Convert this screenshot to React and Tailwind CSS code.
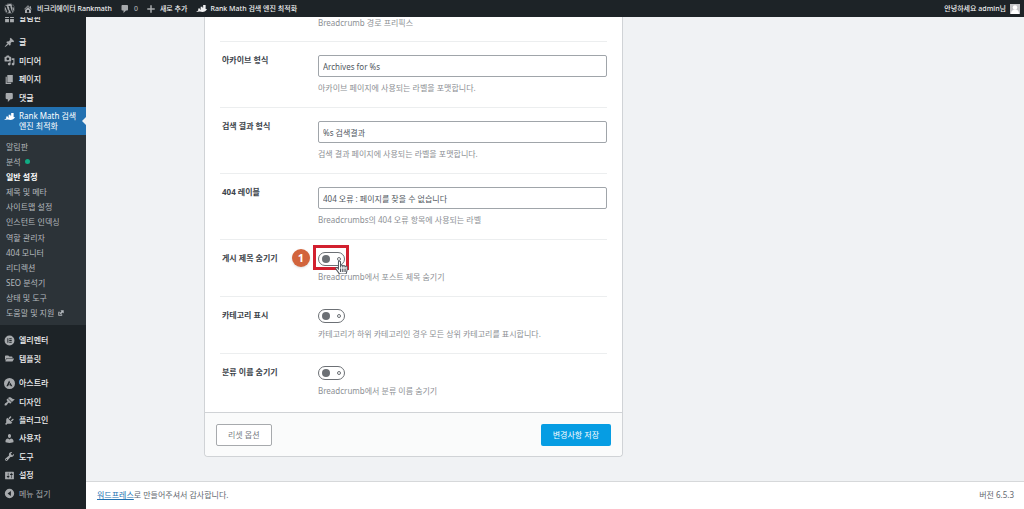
import React from 'react';
import { FaWordpress, FaFolderOpen, FaHandPointer } from 'react-icons/fa';

const paths = {
  dashboard: 'M2 3h7v6H2zM11 3h7v6h-7zM2 11h7v6H2zM11 11h7v6h-7z',
  post: 'M10.44 3.02l1.82-1.82 6.36 6.35-1.83 1.82c-1.05-.68-2.48-.57-3.41.36l-.75.75c-.92.93-1.04 2.35-.35 3.41l-1.83 1.82-2.41-2.41-2.8 2.79c-.42.42-3.38 2.71-3.8 2.29s1.86-3.39 2.28-3.81l2.79-2.79L4.1 9.36l1.83-1.82c1.05.69 2.48.57 3.4-.36l.75-.75c.93-.92 1.05-2.35.36-3.41z',
  media: 'M13 11V4c0-.55-.45-1-1-1h-1.67L9 1H5L3.67 3H2c-.55 0-1 .45-1 1v7c0 .55.45 1 1 1h10c.55 0 1-.45 1-1zM7 4.5c1.38 0 2.5 1.12 2.5 2.5S8.38 9.5 7 9.5 4.5 8.38 4.5 7 5.62 4.5 7 4.5zM14 6h5v10.5c0 1.38-1.12 2.5-2.5 2.5S14 17.88 14 16.5s1.12-2.5 2.5-2.5c.17 0 .34.02.5.05V9h-3V6zm-4 8.05V13h2v3.5c0 1.38-1.12 2.5-2.5 2.5S7 17.88 7 16.5 8.12 14 9.5 14c.17 0 .34.02.5.05z',
  page: 'M6 15V2h10v13H6zm-1 1h8v2H3V5h2v11z',
  comments: 'M5 2h9c1.1 0 2 .9 2 2v7c0 1.1-.9 2-2 2h-2l-5 5v-5H5c-1.1 0-2-.9-2-2V4c0-1.1.9-2 2-2z',
  home: 'M16 8.5l1.53 1.53-1.06 1.06L10 4.6l-6.47 6.49-1.06-1.06L10 2.5l4 4v-2h2v4zm-6-2.46l6 5.99V18H4v-5.97zM12 17v-5H8v5h4z',
  plus: 'M17.5 8.5v3h-6v6h-3v-6h-6v-3h6v-6h3v6z',
  rank: 'M4 10h3.500v2.500l1-.7V7H12v2.500l1-.8V3.500h4.500V11c1.500-.2 2.500 0 2.500 0-1.500 3-4.500 5.500-8.500 5.500L7 15.500l-7 1 4-3z',
  elementor: 'M10 1a9 9 0 1 0 0 18 9 9 0 0 0 0-18zM6.200 6h1.700v8H6.200zM9.500 6H14v1.600H9.500zM9.500 9.200H14v1.600H9.500zM9.500 12.400H14V14H9.500z',
  astra: 'M10 0a10 10 0 1 0 0 20 10 10 0 0 0 0-20zM9.300 4.500l1.600 3.200-3.500 7.300H4.300zM11.500 8.800l3.800 6.200h-3l-.8-2H9.400z',
  appearance: 'M14.48 11.06L7.41 3.99l1.5-1.5c.5-.56 2.3-.47 3.51.32 1.21.8 1.43 1.28 2.91 2.1 1.18.64 2.45 1.26 4.45.85zm-.71.71L6.7 4.7 4.93 6.47c-.39.39-.39 1.02 0 1.41l1.06 1.06c.39.39.39 1.03 0 1.42-.6.6-1.43 1.11-2.21 1.69-.35.26-.7.53-1.01.84C1.43 14.23.4 16.08 1.4 17.07c.99 1 2.84-.03 4.18-1.36.31-.31.58-.66.85-1.02.57-.78 1.08-1.61 1.69-2.21.39-.39 1.02-.39 1.41 0l1.06 1.06c.39.39 1.02.39 1.41 0z',
  plugins: 'M13.11 4.36L9.87 7.6 8 5.73l3.24-3.24c.35-.34 1.05-.2 1.56.32.52.51.66 1.21.31 1.55zm-8 1.77l.91-1.12 9.01 9.01-1.19.84c-.71.71-2.63 1.16-3.82 1.16H6.14L4.9 17.26c-.59.59-1.54.59-2.12 0-.59-.58-.59-1.53 0-2.12l1.24-1.24v-3.88c0-1.13.4-3.19 1.09-3.89zm7.26 3.97l3.24-3.24c.34-.35 1.04-.21 1.55.31.52.51.66 1.21.31 1.55l-3.24 3.25z',
  users: 'M10 9.25c-2.27 0-2.73-3.44-2.73-3.44C7 4.02 7.82 2 9.97 2c2.16 0 2.98 2.02 2.71 3.81 0 0-.41 3.44-2.68 3.44zm0 2.57L12.72 10c2.39 0 4.52 2.33 4.52 4.53v2.49s-3.65 1.13-7.24 1.13c-3.65 0-7.24-1.13-7.24-1.13v-2.49c0-2.25 1.94-4.48 4.47-4.48z',
  tools: 'M16.68 9.77c-1.34 1.34-3.3 1.67-4.95.99l-5.41 6.52c-.99.99-2.59.99-3.58 0s-.99-2.59 0-3.57l6.52-5.42c-.68-1.65-.35-3.61.99-4.95 1.28-1.28 3.12-1.62 4.72-1.06l-2.89 2.89 2.82 2.82 2.86-2.87c.53 1.58.18 3.39-1.08 4.65zM3.81 16.21c.4.39 1.04.39 1.43 0 .4-.4.4-1.04 0-1.43-.39-.4-1.03-.4-1.43 0-.39.39-.39 1.03 0 1.43z',
  settings: 'M18 16V4c0-.55-.45-1-1-1H3c-.55 0-1 .45-1 1v12c0 .55.45 1 1 1h14c.55 0 1-.45 1-1zM8 11h1c.55 0 1 .45 1 1s-.45 1-1 1H8v1.5c0 .28-.22.5-.5.5s-.5-.22-.5-.5V13H6c-.55 0-1-.45-1-1s.45-1 1-1h1V5.5c0-.28.22-.5.5-.5s.5.22.5.5V11zm5-2h-1c-.55 0-1-.45-1-1s.45-1 1-1h1V5.5c0-.28.22-.5.5-.5s.5.22.5.5V7h1c.55 0 1 .45 1 1s-.45 1-1 1h-1v5.5c0 .28-.22.5-.5.5s-.5-.22-.5-.5V9z',
  collapse: 'M10 1.500a8.500 8.500 0 1 0 0 17 8.500 8.500 0 0 0 0-17zM12.500 5.500v9l-6-4.500z',
  external: 'M8 1h11v11l-3.500-3.500-6 6-4-4 6-6zM1 6h5v3H4v7h7v-2h3v5H1z',
};

function Icon({ name, className = 'size-[11px]' }) {
  return (
    <svg viewBox="0 0 20 20" fill="currentColor" fillRule="evenodd" aria-hidden="true" className={`shrink-0 ${className}`}>
      <path d={paths[name]} />
    </svg>
  );
}

function MenuItem({ icon, children, muted }) {
  return (
    <li className="flex">
      <a href="#" className={`flex min-h-[18px] flex-1 items-center gap-1 pl-1 ${muted ? 'font-normal text-[#a7aaad]' : 'text-[#f0f0f1]'}`}>
        <span className="flex w-[11px] justify-center text-[#a7aaad]">
          {icon === 'folder' ? <FaFolderOpen className="size-[9px]" /> : <Icon name={icon} />}
        </span>
        {children}
      </a>
    </li>
  );
}

const submenu = ['알림판', '분석', '일반 설정', '제목 및 메타', '사이트맵 설정', '인스턴트 인덱싱', '역할 관리자', '404 모니터', '리디렉션', 'SEO 분석기', '상태 및 도구', '도움말 및 지원'];

function Sidebar() {
  return (
    <aside className="w-[86px] shrink-0 overflow-hidden bg-[#1d2327] font-medium">
      <nav className="-mt-2">
        <ul>
          <MenuItem icon="dashboard">알림판</MenuItem>
        </ul>
        <ul className="mt-1.5 grid h-[74px]">
          <MenuItem icon="post">글</MenuItem>
          <MenuItem icon="media">미디어</MenuItem>
          <MenuItem icon="page">페이지</MenuItem>
          <MenuItem icon="comments">댓글</MenuItem>
        </ul>
        <a href="#" className="relative flex gap-1 bg-[#2271b1] py-1 pl-1 leading-[10px] font-normal text-white">
          <Icon name="rank" />
          <span>Rank Math 검색<br />엔진 최적화</span>
          <span className="absolute top-1/2 right-0 -translate-y-1/2 border-4 border-l-0 border-transparent border-r-[#f0f2f4]" />
        </a>
        <ul className="grid h-[190px] bg-[#2c3338] pt-1 pb-1 font-normal text-[#b4b9be]">
          {submenu.map((t) => (
            <li key={t} className="flex">
              <a href="#" className={`flex flex-1 items-center gap-1 pl-1.5 ${t === '일반 설정' ? 'font-bold text-white' : ''}`}>
                {t}
                {t === '분석' && <span className="size-[5px] rounded-full bg-[#10ac84]" />}
                {t === '도움말 및 지원' && <Icon name="external" className="size-[6px]" />}
              </a>
            </li>
          ))}
        </ul>
        <ul className="mt-1.5 grid h-[37px]">
          <MenuItem icon="elementor">엘리멘터</MenuItem>
          <MenuItem icon="folder">템플릿</MenuItem>
        </ul>
        <ul className="mt-1.5 grid h-[129px]">
          <MenuItem icon="astra">아스트라</MenuItem>
          <MenuItem icon="appearance">디자인</MenuItem>
          <MenuItem icon="plugins">플러그인</MenuItem>
          <MenuItem icon="users">사용자</MenuItem>
          <MenuItem icon="tools">도구</MenuItem>
          <MenuItem icon="settings">설정</MenuItem>
          <MenuItem icon="collapse" muted>메뉴 접기</MenuItem>
        </ul>
      </nav>
    </aside>
  );
}

function AdminBar() {
  return (
    <header className="flex h-[17px] items-center gap-2 bg-[#1d2327] px-1 text-[7px] font-medium text-[#f0f0f1]">
      <a href="#" aria-label="WordPress" className="text-[#a7aaad]"><FaWordpress className="size-[11px]" /></a>
      <a href="#" className="flex items-center gap-1"><Icon name="home" className="size-[10px] text-[#a7aaad]" />비크리에이터 Rankmath</a>
      <a href="#" className="flex items-center gap-1 text-[#a7aaad]"><Icon name="comments" className="size-[10px]" />0</a>
      <a href="#" className="flex items-center gap-1"><Icon name="plus" className="size-[10px] text-[#a7aaad]" />새로 추가</a>
      <a href="#" className="flex items-center gap-1"><Icon name="rank" />Rank Math 검색 엔진 최적화</a>
      <a href="#" className="ml-auto flex items-center gap-1">
        안녕하세요 admin님
        <svg viewBox="0 0 20 20" className="size-[10px]" aria-hidden="true">
          <rect width="20" height="20" fill="#c3c4c7" />
          <circle cx="10" cy="7" r="4.500" fill="#fff" />
          <path d="M2 20c0-6 3-9 8-9s8 3 8 9z" fill="#fff" />
        </svg>
      </a>
    </header>
  );
}

function Row({ id, label, help, children, last }) {
  return (
    <div className={`flex pt-3 pb-[13px] ${last ? '' : 'border-b border-[#eceeef]'}`}>
      <label htmlFor={id} className="w-[98px] shrink-0 pl-0.5 leading-3 font-bold text-[#3c434a]">{label}</label>
      <div className="flex-1">
        {children}
        <p className="mt-[5px] leading-3 text-[#8c8f94]">{help}</p>
      </div>
    </div>
  );
}

function TextRow({ id, label, help, value }) {
  return (
    <Row id={id} label={label} help={help}>
      <input id={id} type="text" defaultValue={value} className="mt-px block h-[22px] w-full rounded-xs border border-[#a0a5aa] bg-white px-1 text-[#50575e]" />
    </Row>
  );
}

function ToggleRow({ id, label, help, marked, last }) {
  return (
    <Row id={id} label={label} help={help} last={last}>
      <div className="relative w-[27px]">
        <input
          id={id}
          type="checkbox"
          className="flex h-[14px] w-[27px] appearance-none items-center justify-between rounded-full border border-[#6c7075] bg-white px-[3px] before:size-2 before:rounded-full before:bg-[#6c7075] after:size-1 after:rounded-full after:border after:border-[#6c7075]"
        />
        {marked && (
          <>
            <span className="pointer-events-none absolute -top-[7px] -left-[5px] h-[25px] w-9 border-3 border-[#d2202f]" />
            <span className="absolute -top-[3px] -left-[26px] flex size-[18px] items-center justify-center rounded-full bg-[#d2643c] text-[11px] font-bold text-white shadow-sm">1</span>
            <FaHandPointer className="pointer-events-none absolute top-[9px] left-[17px] size-[13px] fill-white stroke-[#50575e] [stroke-width:40]" />
          </>
        )}
      </div>
    </Row>
  );
}

export default function App() {
  return (
    <div className="flex min-h-screen flex-col bg-[#f0f2f4] font-['Noto_Sans','Noto_Sans_CJK_KR',sans-serif] text-[8px] leading-3">
      <AdminBar />
      <div className="flex flex-1">
        <Sidebar />
        <div className="flex flex-1 flex-col">
          <main className="flex-1 pl-[118px]">
            <form className="w-[419px] rounded-b border border-t-0 border-[#d0d3d6] bg-white">
              <div className="px-[15px] pb-0.5">
                <p className="h-[25px] border-b border-[#eceeef] pl-[98px] leading-3 text-[#8c8f94]">Breadcrumb 경로 프리픽스</p>
                <TextRow id="archive" label="아카이브 형식" value="Archives for %s" help="아카이브 페이지에 사용되는 라벨을 포맷합니다." />
                <TextRow id="search" label="검색 결과 형식" value="%s 검색결과" help="검색 결과 페이지에 사용되는 라벨을 포맷합니다." />
                <TextRow id="notfound" label="404 레이블" value="404 오류 : 페이지를 찾을 수 없습니다" help="Breadcrumbs의 404 오류 항목에 사용되는 라벨" />
                <ToggleRow id="hide-title" label="게시 제목 숨기기" help="Breadcrumb에서 포스트 제목 숨기기" marked />
                <ToggleRow id="show-category" label="카테고리 표시" help="카테고리가 하위 카테고리인 경우 모든 상위 카테고리를 표시합니다." />
                <ToggleRow id="hide-taxonomy" label="분류 이름 숨기기" help="Breadcrumb에서 분류 이름 숨기기" last />
              </div>
              <div className="flex justify-between rounded-b border-t border-[#d0d3d6] bg-[#fafbfb] px-[11px] pt-[11px] pb-2.5">
                <button type="button" className="h-[22px] rounded-xs border border-[#a7aaad] bg-white px-[11px] text-[#787c82]">리셋 옵션</button>
                <button type="submit" className="h-[22px] rounded-xs bg-[#069de3] px-3 text-white">변경사항 저장</button>
              </div>
            </form>
          </main>
          <footer className="flex justify-between border-t border-[#d6d8da] bg-white py-[7px] pr-2.5 pb-2 pl-[11px] text-[#646970]">
            <p><a href="#" className="text-[#2271b1] underline">워드프레스</a>로 만들어주셔서 감사합니다.</p>
            <p>버전 6.5.3</p>
          </footer>
        </div>
      </div>
    </div>
  );
}
